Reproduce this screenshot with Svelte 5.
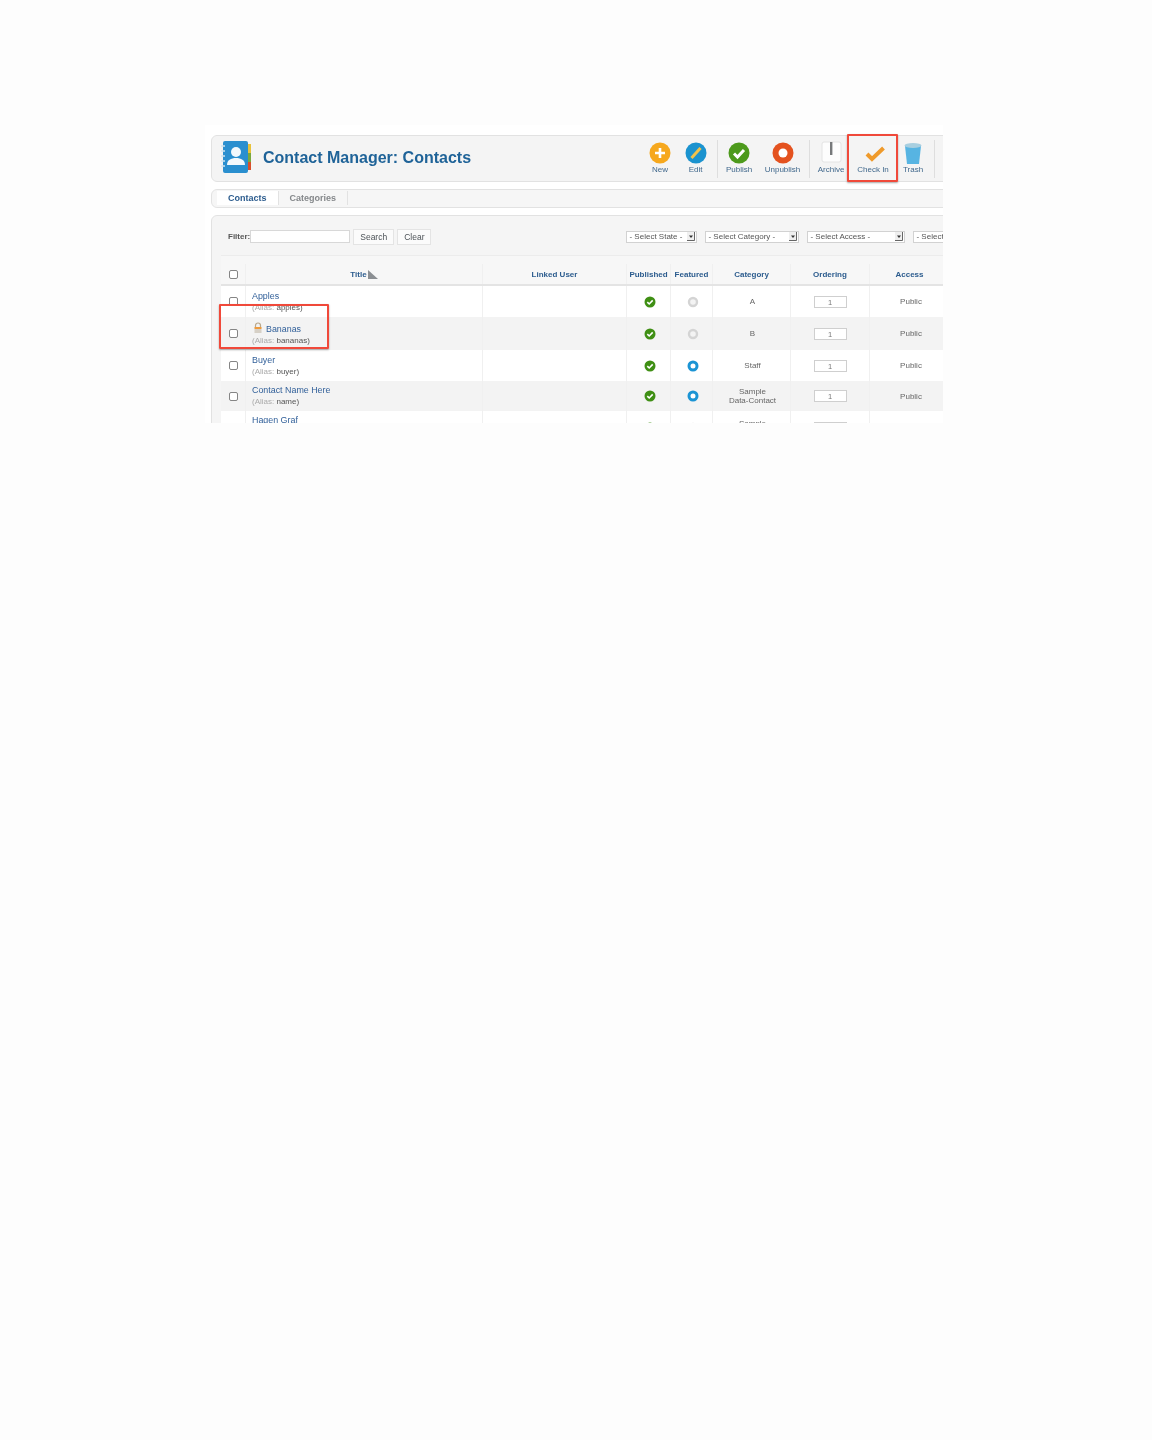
<script>
  const tools = [
    { label: 'New', w: 36, kind: 'new' },
    { label: 'Edit', w: 40, kind: 'edit', sep: true },
    { label: 'Publish', w: 42, kind: 'publish' },
    { label: 'Unpublish', w: 50, kind: 'unpublish', sep: true },
    { label: 'Archive', w: 42, kind: 'archive' },
    { label: 'Check In', w: 42, kind: 'checkin' },
    { label: 'Trash', w: 41, kind: 'trash', sep: true, tight: true }
  ];
  const filters = [
    { label: '- Select State -', w: 71 },
    { label: '- Select Category -', w: 94 },
    { label: '- Select Access -', w: 98 },
    { label: '- Select', w: 60 }
  ];
  const rows = [
    { title: 'Apples', alias: 'apples', feat: false, cat: ['A'], h: 31, top: 0, bottom: 0 },
    { title: 'Bananas', alias: 'bananas', feat: false, cat: ['B'], h: 33, locked: true, top: 2, bottom: 0 },
    { title: 'Buyer', alias: 'buyer', feat: true, cat: ['Staff'], h: 31, top: 0, bottom: 0 },
    { title: 'Contact Name Here', alias: 'name', feat: true, cat: ['Sample', 'Data-Contact'], h: 30, top: 0, bottom: 2 },
    { title: 'Hagen Graf', alias: 'hagen', feat: false, cat: ['Sample', 'Data-Contact'], h: 33, top: 0, bottom: 4 }
  ];
</script>

<div class="page">
  <div class="shot">
    <div class="blur">
      <header class="toolbar">
        <svg class="logo" width="32" height="34" viewBox="0 0 32 34">
          <rect x="26" y="4" width="4" height="9" fill="#e8c23a" />
          <rect x="26" y="13" width="4" height="9" fill="#7aa83c" />
          <rect x="26" y="22" width="4" height="8" fill="#d9502a" />
          <rect x="2" y="1" width="25" height="32" rx="2" fill="#2a8fcf" />
          <path d="M0 6h4M0 11h4M0 16h4M0 21h4M0 26h4" stroke="#cfe3ef" stroke-width="1.5" />
          <circle cx="15" cy="12" r="5" fill="#f4f9fc" />
          <path d="M6 25c0-5 4-7 9-7s9 2 9 7z" fill="#f4f9fc" />
        </svg>
        <h1>Contact Manager: Contacts</h1>
        <div class="tools">
          {#each tools as t}
            <div class="tool" class:sep={t.sep} class:tight={t.tight} style="width:{t.w}px">
              <svg width="26" height="26" viewBox="0 0 26 26">
                {#if t.kind === 'new'}
                  <circle cx="13" cy="13" r="10.5" fill="#f6a81e" />
                  <path d="M13 8v10M8 13h10" stroke="#fff" stroke-width="2.6" />
                {:else if t.kind === 'edit'}
                  <circle cx="13" cy="13" r="10.5" fill="#1b93cf" />
                  <path d="M8.5 18 17.5 8" stroke="#f1c24b" stroke-width="3" />
                {:else if t.kind === 'publish'}
                  <circle cx="13" cy="13" r="10.5" fill="#4d9a1c" />
                  <path d="M8 13.5l3.5 3.5 6.5-7" fill="none" stroke="#fff" stroke-width="3" />
                {:else if t.kind === 'unpublish'}
                  <circle cx="13" cy="13" r="10.5" fill="#e4521f" />
                  <circle cx="13" cy="13" r="4.5" fill="#fff" />
                {:else if t.kind === 'archive'}
                  <rect x="4" y="2" width="19" height="20" rx="2" fill="#fdfdfd" stroke="#e4e4e4" />
                  <rect x="12" y="2" width="2.4" height="13" fill="#77797b" />
                {:else if t.kind === 'checkin'}
                  <path d="M7 14l5 5L23.5 8" fill="none" stroke="#ef9a2b" stroke-width="4" />
                {:else}
                  <path d="M5 6h16l-2 18H7z" fill="#57b4e2" />
                  <ellipse cx="13" cy="5.5" rx="8.5" ry="2.5" fill="#a8cfe0" />
                {/if}
              </svg>
              <span>{t.label}</span>
            </div>
          {/each}
        </div>
      </header>

      <nav class="subnav">
        <span class="tab active">Contacts</span>
        <span class="tab">Categories</span>
      </nav>

      <section class="main">
        <div class="filter">
          <label for="flt">Filter:</label>
          <input id="flt" class="search" />
          <span class="btn">Search</span>
          <span class="btn">Clear</span>
          <div class="selects">
            {#each filters as f}
              <div class="select" style="width:{f.w}px">
                <span>{f.label}</span>
                <svg width="8" height="9" viewBox="0 0 8 9"><rect width="8" height="9" fill="#efefef" /><path d="M7.5 0v8.500H0" fill="none" stroke="#666" /><path d="M2 3.500h4L4 6z" fill="#333" /></svg>
              </div>
            {/each}
          </div>
        </div>

        <div class="grid head">
          <div class="c"><b class="box"></b></div>
          <div class="c th">Title<svg width="10" height="9" viewBox="0 0 10 9"><path d="M0 0l10 9H0z" fill="#8b8f93" /></svg></div>
          <div class="c th">Linked User</div>
          <div class="c th">Published</div>
          <div class="c th">Featured</div>
          <div class="c th">Category</div>
          <div class="c th">Ordering</div>
          <div class="c th">Access</div>
        </div>

        {#each rows as r, i}
          <div class="grid row" class:odd={i % 2 === 1} style="height:{r.h}px">
            <div class="c pad1"><b class="box"></b></div>
            <div class="c name" style="padding-top:{r.top}px;padding-bottom:{r.bottom}px">
              <div class="link">
                {#if r.locked}
                  <svg class="lock" width="10" height="12" viewBox="0 0 10 12"><path d="M2.500 6V3.500a2.500 2.500 0 0 1 5 0V6" fill="none" stroke="#b9a88c" stroke-width="1.2" /><rect x="1.500" y="5" width="7" height="2" fill="#ee9a3c" /><rect x="1.500" y="7" width="7" height="4" fill="#d6d0c6" /></svg>
                {/if}
                {r.title}
              </div>
              <div class="alias"><em>(Alias:</em> {r.alias})</div>
            </div>
            <div class="c"></div>
            <div class="c pad2">
              <svg width="12" height="12" viewBox="0 0 12 12"><circle cx="6" cy="6" r="5.500" fill="#3f8f14" /><path d="M3.300 6.200 5.200 8l3.500-3.600" fill="none" stroke="#fff" stroke-width="1.600" /></svg>
            </div>
            <div class="c pad2">
              {#if r.feat}
                <svg width="12" height="12" viewBox="0 0 12 12"><circle cx="6" cy="6" r="4" fill="#fff" stroke="#1b94d4" stroke-width="3" /></svg>
              {:else}
                <svg width="12" height="12" viewBox="0 0 12 12"><circle cx="6" cy="6" r="4" fill="#f3f3f3" stroke="#d4d4d4" stroke-width="2.400" /></svg>
              {/if}
            </div>
            <div class="c cat pad2">
              {#each r.cat as line}<span>{line}</span>{/each}
            </div>
            <div class="c"><div class="order">1</div></div>
            <div class="c txt pad3">Public</div>
          </div>
        {/each}
      </section>
    </div>

    <div class="mark mark-check"></div>
    <div class="mark mark-row"></div>
  </div>
</div>

<style>
  :global(body) {
    margin: 0;
    background: #fdfdfd;
  }
  .page {
    height: 1440px;
    padding: 125px 0 0 205px;
    box-sizing: border-box;
    font-family: "Liberation Sans", Arial, sans-serif;
  }
  .shot {
    position: relative;
    width: 738px;
    height: 298px;
    overflow: hidden;
    background: #fff;
  }
  .blur {
    width: 780px;
    padding: 10px 0 0 6px;
    box-sizing: border-box;
    filter: blur(0.7px);
  }
  .toolbar {
    display: flex;
    align-items: center;
    height: 47px;
    box-sizing: border-box;
    padding-left: 9px;
    background: #f4f4f4;
    border: 1px solid #e2e2e2;
    border-radius: 6px;
  }
  .logo {
    flex: none;
    margin-top: -3px;
  }
  h1 {
    margin: 0 0 2px 10px;
    font-size: 16px;
    font-weight: bold;
    color: #1f6398;
    white-space: nowrap;
  }
  .tools {
    display: flex;
    margin-left: 171px;
    height: 38px;
  }
  .tool {
    display: flex;
    flex-direction: column;
    align-items: center;
    flex: none;
    box-sizing: border-box;
    font-size: 8px;
    color: #41688c;
    white-space: nowrap;
  }
  .tool svg {
    display: block;
    flex: none;
  }
  .tool span {
    margin-top: -1px;
  }
  .tool.sep {
    padding-right: 4px;
    border-right: 1px solid #dedede;
  }
  .tool.sep.tight {
    padding-right: 2px;
  }
  .subnav {
    display: flex;
    align-items: flex-start;
    height: 19px;
    box-sizing: border-box;
    margin-top: 7px;
    padding: 1px 0 0 5px;
    background: #f6f6f6;
    border: 1px solid #e2e2e2;
    border-radius: 6px;
    font-size: 9px;
    font-weight: bold;
  }
  .tab {
    height: 14px;
    line-height: 14px;
    padding: 0 11px;
    color: #85888b;
    border-right: 1px solid #e2e2e2;
  }
  .tab.active {
    color: #2c5c8e;
    background: #fff;
  }
  .main {
    margin-top: 7px;
    padding: 0 0 0 9px;
    background: #f5f5f5;
    border: 1px solid #e2e2e2;
    border-radius: 6px 6px 0 0;
    height: 260px;
    box-sizing: border-box;
  }
  .filter {
    display: flex;
    align-items: center;
    height: 40px;
    padding: 2px 0 0 7px;
    box-sizing: border-box;
    border-bottom: 1px solid #ececec;
    font-size: 8px;
    color: #555;
  }
  label {
    font-weight: bold;
    font-size: 8px;
  }
  .search {
    width: 100px;
    height: 13px;
    box-sizing: border-box;
    margin: 0;
    padding: 0;
    background: #fff;
    border: 1px solid #d8d8d8;
  }
  .btn {
    height: 14px;
    line-height: 14px;
    margin-left: 3px;
    padding: 0 6px;
    background: #fbfbfb;
    border: 1px solid #e4e4e4;
    font-size: 8.5px;
    color: #4d5358;
  }
  .selects {
    display: flex;
    gap: 8px;
    margin-left: 195px;
  }
  .select {
    display: flex;
    justify-content: space-between;
    align-items: center;
    flex: none;
    box-sizing: border-box;
    height: 12px;
    padding: 0 1px 0 2px;
    background: #fff;
    border: 1px solid #d2d2d2;
    font-size: 8px;
    color: #555;
    white-space: nowrap;
    overflow: hidden;
  }
  .select svg {
    flex: none;
  }
  .grid {
    display: grid;
    grid-template-columns: 25px 237px 144px 44px 42px 78px 79px 80px;
  }
  .head {
    height: 30px;
    padding-top: 8px;
    border-bottom: 2px solid #e4e4e4;
    box-sizing: border-box;
    background: #f7f7f7;
  }
  .row {
    background: #fff;
    box-sizing: border-box;
  }
  .row.odd {
    background: #f3f3f3;
  }
  .c {
    display: flex;
    align-items: center;
    justify-content: center;
    border-right: 1px solid #f0f0f0;
    font-size: 8px;
    color: #666;
    box-sizing: border-box;
    min-width: 0;
  }
  .pad1 {
    padding-left: 1px;
  }
  .pad2 {
    padding-left: 2px;
  }
  .pad3 {
    padding-left: 3px;
  }
  .th {
    font-weight: bold;
    color: #2c5c8e;
    gap: 1px;
    white-space: nowrap;
  }
  .box {
    display: block;
    width: 7px;
    height: 7px;
    background: #fff;
    border: 1px solid #858585;
    border-radius: 2px;
  }
  .name {
    flex-direction: column;
    align-items: flex-start;
    justify-content: center;
    padding-left: 6px;
    gap: 2px;
  }
  .link {
    display: flex;
    align-items: center;
    gap: 3px;
    font-size: 8.9px;
    color: #33619a;
    white-space: nowrap;
  }
  .lock {
    margin: -3px 0 0 1px;
  }
  .alias {
    font-size: 8px;
    color: #555;
  }
  .alias em {
    font-style: normal;
    color: #aaa;
  }
  .cat {
    flex-direction: column;
    line-height: 9px;
  }
  .order {
    width: 33px;
    height: 12px;
    line-height: 11px;
    box-sizing: border-box;
    text-align: center;
    background: #fff;
    border: 1px solid #cfcfcf;
    font-size: 7.5px;
    color: #777;
  }
  .mark {
    position: absolute;
    box-sizing: border-box;
    border: 2px solid #f0493a;
    box-shadow: 0 1px 2px rgba(0, 0, 0, 0.35);
    border-radius: 1px;
  }
  .mark-check {
    left: 642px;
    top: 9px;
    width: 51px;
    height: 48px;
  }
  .mark-row {
    left: 14px;
    top: 179px;
    width: 110px;
    height: 45px;
  }
</style>
